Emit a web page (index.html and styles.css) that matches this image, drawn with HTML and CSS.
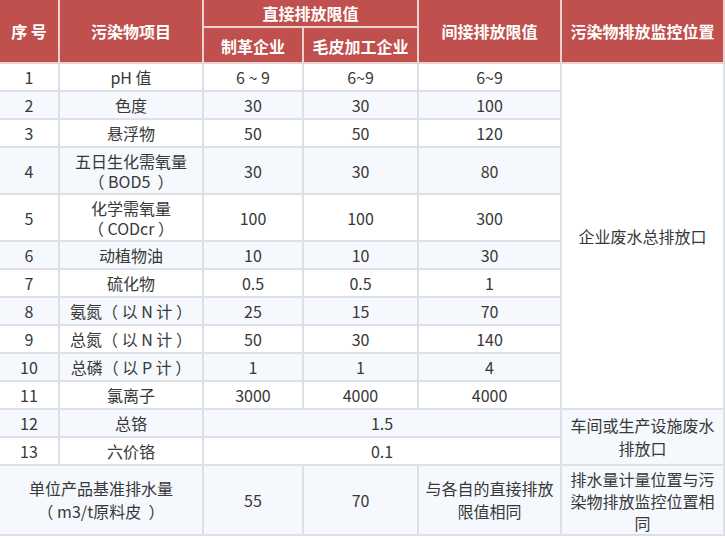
FILE: index.html
```html
<!DOCTYPE html>
<html lang="zh-CN">
<head>
<meta charset="utf-8">
<title>排放限值</title>
<link rel="stylesheet" href="styles.css">
</head>
<body>
<table class="limits">
  <colgroup>
    <col class="c1"><col class="c2"><col class="c3"><col class="c4"><col class="c5"><col class="c6">
  </colgroup>
  <thead>
    <tr class="h1">
      <th rowspan="2">序 号</th>
      <th rowspan="2">污染物项目</th>
      <th colspan="2">直接排放限值</th>
      <th rowspan="2">间接排放限值</th>
      <th rowspan="2">污染物排放监控位置</th>
    </tr>
    <tr class="h2">
      <th>制革企业</th>
      <th>毛皮加工企业</th>
    </tr>
  </thead>
  <tbody>
    <tr><td>1</td><td>pH 值</td><td>6 ~ 9</td><td>6~9</td><td>6~9</td><td rowspan="11" class="loc">企业废水总排放口</td></tr>
    <tr><td>2</td><td>色度</td><td>30</td><td>30</td><td>100</td></tr>
    <tr><td>3</td><td>悬浮物</td><td>50</td><td>50</td><td>120</td></tr>
    <tr class="two"><td>4</td><td>五日生化需氧量<br>（ BOD5 &nbsp;）</td><td>30</td><td>30</td><td>80</td></tr>
    <tr class="two"><td>5</td><td>化学需氧量<br>（ CODcr ）</td><td>100</td><td>100</td><td>300</td></tr>
    <tr><td>6</td><td>动植物油</td><td>10</td><td>10</td><td>30</td></tr>
    <tr><td>7</td><td>硫化物</td><td>0.5</td><td>0.5</td><td>1</td></tr>
    <tr><td>8</td><td>氨氮（ 以 N 计 ）</td><td>25</td><td>15</td><td>70</td></tr>
    <tr><td>9</td><td>总氮（ 以 N 计 ）</td><td>50</td><td>30</td><td>140</td></tr>
    <tr><td>10</td><td>总磷（ 以 P 计 ）</td><td>1</td><td>1</td><td>4</td></tr>
    <tr><td>11</td><td>氯离子</td><td>3000</td><td>4000</td><td>4000</td></tr>
    <tr><td>12</td><td>总铬</td><td colspan="3">1.5</td><td rowspan="2" class="tall">车间或生产设施废水<br>排放口</td></tr>
    <tr><td>13</td><td>六价铬</td><td colspan="3">0.1</td></tr>
    <tr class="last">
      <td colspan="2" class="tall">单位产品基准排水量<br>（ m3/t原料皮 &nbsp;）</td>
      <td>55</td>
      <td>70</td>
      <td class="tall">与各自的直接排放<br>限值相同</td>
      <td class="tall tight">排水量计量位置与污<br>染物排放监控位置相<br>同</td>
    </tr>
  </tbody>
</table>
</body>
</html>
```
FILE: styles.css
```css
html, body {
  margin: 0;
  padding: 0;
  background: #ffffff;
}

.limits {
  width: 725px;
  table-layout: fixed;
  border-collapse: separate;
  border-spacing: 0;
  font-family: "Noto Sans CJK SC", "Microsoft YaHei", sans-serif;
  font-size: 16px;
  color: #383838;
}

.c1 { width: 60px; }
.c2 { width: 144px; }
.c3 { width: 100px; }
.c4 { width: 115px; }
.c5 { width: 143px; }
.c6 { width: 163px; }

.limits tr { height: 28px; }
.limits tr.h1 { height: 28px; }
.limits tr.h2 { height: 36px; }
.limits tr.two { height: 47px; }
.limits tr.last { height: 70px; }

.limits th,
.limits td {
  text-align: center;
  vertical-align: middle;
  line-height: 19px;
  padding: 2px 2px 1px;
  border-right: 2px solid #dcdfe3;
  border-bottom: 2px solid #dcdfe3;
}

.limits th {
  background: #c0504d;
  color: #ffffff;
  font-weight: bold;
  border-color: #ecd2d1;
}

.limits .h2 th {
  padding-top: 3px;
}

.limits tbody tr:nth-child(even) td {
  background: #f5f9fd;
}

.limits tbody tr:nth-child(odd) td {
  background: #ffffff;
}

.limits tr.two td {
  line-height: 20px;
}

.limits td.tall {
  line-height: 23px;
  padding: 0 2px;
}

.limits td.tight {
  line-height: 22px;
  padding: 1px 2px 0;
}
```
